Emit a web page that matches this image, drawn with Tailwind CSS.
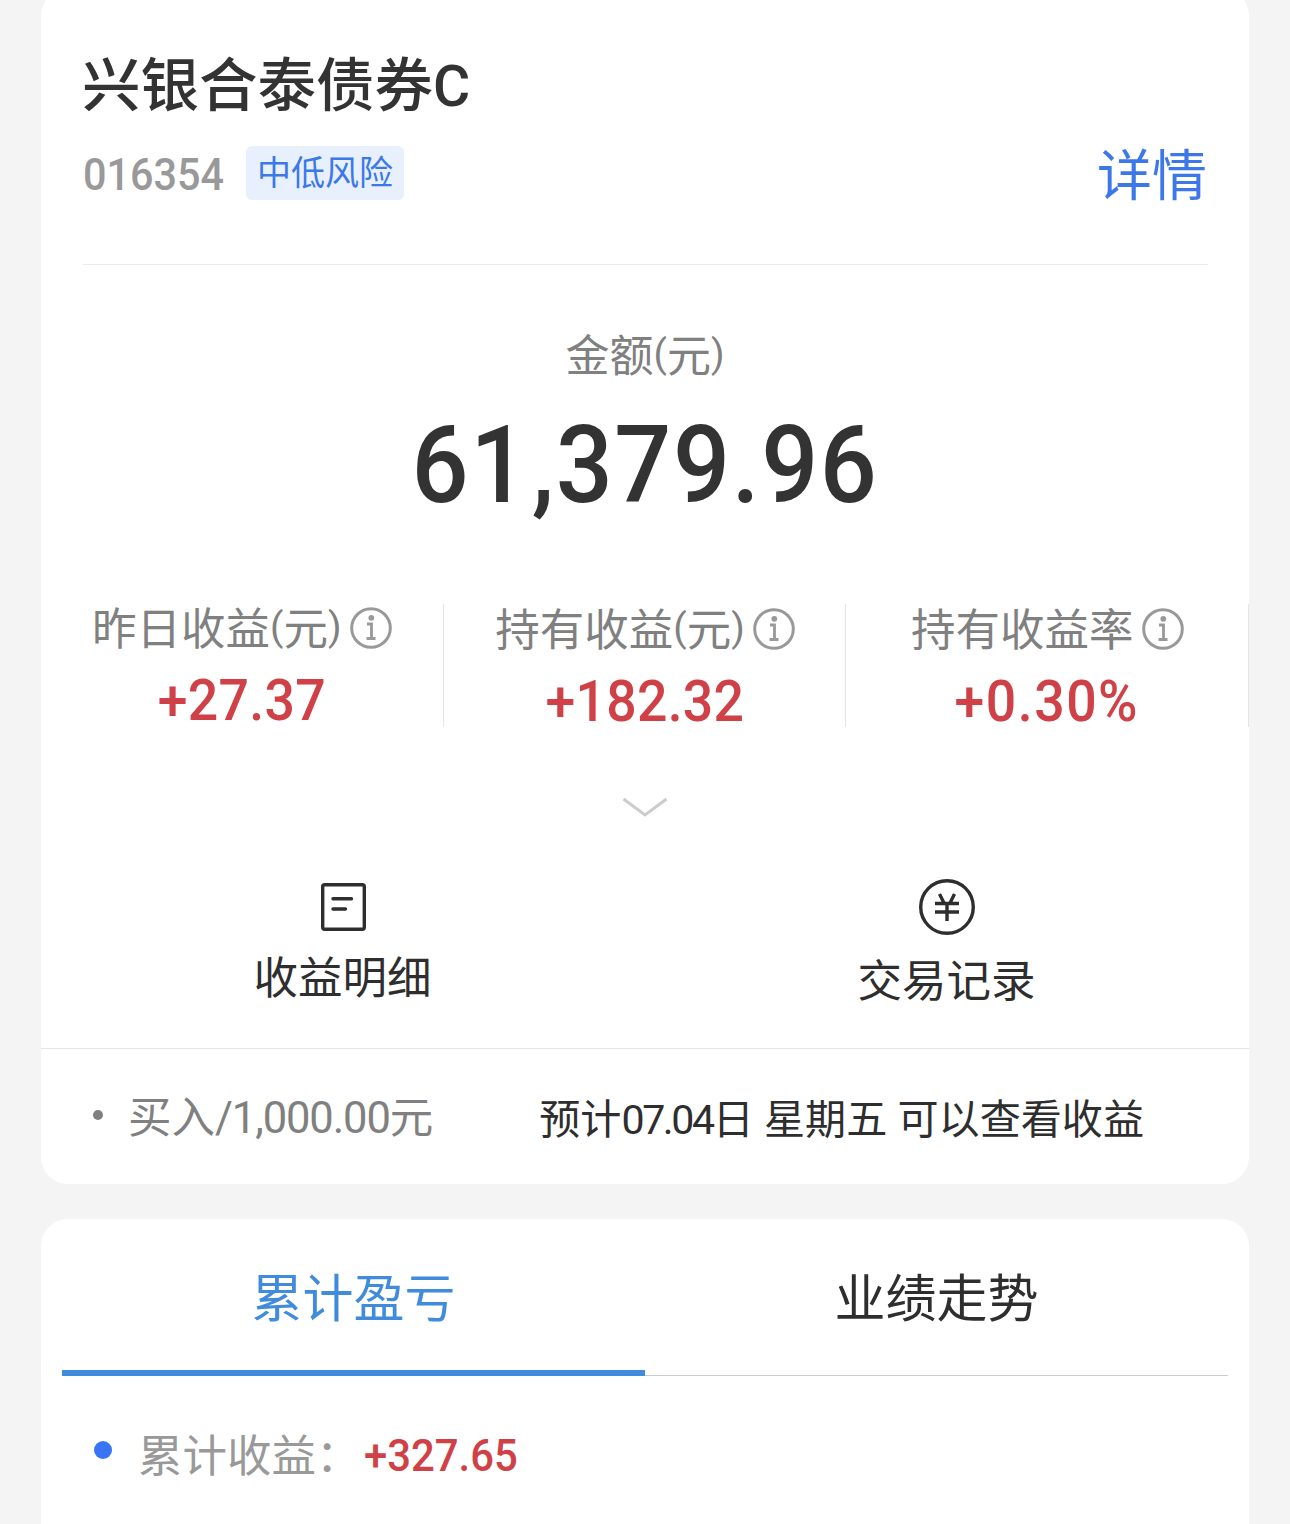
<!DOCTYPE html>
<html lang="zh-CN">
<head>
  <meta charset="UTF-8">
  <meta name="viewport" content="width=device-width, initial-scale=1.0">
  <title>兴银合泰债券C</title>
  <script src="https://cdn.jsdelivr.net/npm/@tailwindcss/browser@4"></script>
</head>
<body class="h-[1524px] overflow-hidden bg-[#f4f4f4] px-[41px] font-[Roboto,'Noto_Sans_CJK_SC',sans-serif] text-[#333]">

  <!-- Fund card -->
  <section class="-mt-[11px] h-[1195px] rounded-[27px] bg-white pt-[67px]">
    <div class="mr-[41px] ml-[42px] h-[209px] border-b border-[#ebebeb]">
      <h1 class="-ml-px h-[60px] text-[58.5px] leading-[61px] font-medium whitespace-nowrap">兴银合泰债券<span class="text-[57px] leading-none">C</span></h1>
      <div class="mt-[30px] flex h-[54px] items-center">
        <span class="w-[141px] origin-left scale-x-[0.93] pt-[3px] text-[44.5px] leading-[54px] font-medium text-[#999]">016354</span>
        <span class="ml-[22px] h-[54px] w-[158px] rounded-md bg-[#e8f0fd] text-center text-[34px] leading-[55px] text-[#3c78e8]">中低风险</span>
        <a href="#" class="mr-px ml-auto pt-[6px] text-[55px] leading-[56px] text-[#3c78e8]">详情</a>
      </div>
    </div>

    <!-- Amount -->
    <div class="mt-[62px] text-center">
      <p class="h-[60px] text-[44px] leading-[60px] text-[#808080]">金额<span class="align-[5px] text-[39px] leading-none">(</span>元<span class="align-[5px] text-[39px] leading-none">)</span></p>
      <p class="mt-6 scale-x-[0.93] text-[108px] leading-[108px] font-medium tracking-[1.7px]">61<span class="ml-[3px]">,</span>379.96</p>
    </div>

    <!-- Earnings -->
    <div class="mt-[85px] grid h-[123px] grid-cols-3 text-center">
      <div class="border-r border-[#e5e5e5]">
        <div class="flex h-[52px] items-center justify-center text-[44.5px] leading-[52px] text-[#808080]">
          <span>昨日收益<span class="align-[5px] text-[39px] leading-none">(</span>元<span class="align-[5px] text-[39px] leading-none">)</span></span>
          <svg class="mt-[-5px] ml-2 size-[42px]" viewBox="0 0 42 42" fill="none" stroke="#999" stroke-width="3"><circle cx="21" cy="21" r="19.3"/><path d="M17 17h4.5v14.5M16.5 31.5h9" stroke-width="2.8"/><circle cx="21.3" cy="10.8" r="2.9" fill="#999" stroke="none"/></svg>
        </div>
        <p class="mt-5 scale-x-[0.94] text-[57px] leading-[50px] font-medium tracking-[0.3px] text-[#cf4146]">+27.37</p>
      </div>
      <div class="border-r border-[#e5e5e5]">
        <div class="flex h-[52px] items-center justify-center pt-px pl-px text-[44.5px] leading-[52px] text-[#808080]">
          <span>持有收益<span class="align-[5px] text-[39px] leading-none">(</span>元<span class="align-[5px] text-[39px] leading-none">)</span></span>
          <svg class="mt-[-4px] ml-2 size-[42px]" viewBox="0 0 42 42" fill="none" stroke="#999" stroke-width="3"><circle cx="21" cy="21" r="19.3"/><path d="M17 17h4.5v14.5M16.5 31.5h9" stroke-width="2.8"/><circle cx="21.3" cy="10.8" r="2.9" fill="#999" stroke="none"/></svg>
        </div>
        <p class="mt-[21px] scale-x-[0.94] text-[57px] leading-[50px] font-medium tracking-[0.3px] text-[#cf4146]">+182.32</p>
      </div>
      <div class="border-r border-[#e5e5e5]">
        <div class="flex h-[52px] items-center justify-center pt-px pl-px text-[44.5px] leading-[52px] text-[#808080]">
          <span>持有收益率</span>
          <svg class="mt-[-4px] ml-[9px] size-[42px]" viewBox="0 0 42 42" fill="none" stroke="#999" stroke-width="3"><circle cx="21" cy="21" r="19.3"/><path d="M17 17h4.5v14.5M16.5 31.5h9" stroke-width="2.8"/><circle cx="21.3" cy="10.8" r="2.9" fill="#999" stroke="none"/></svg>
        </div>
        <p class="mt-[21px] scale-x-[0.94] text-[57px] leading-[50px] font-medium tracking-[1.6px] text-[#cf4146]">+0.30%</p>
      </div>
    </div>

    <svg class="mx-auto mt-[69px] h-[22px] w-[46px]" viewBox="0 0 46 22" fill="none" stroke="#ccc" stroke-width="3"><path d="M1.5 3 23 19 44.5 3"/></svg>

    <!-- Shortcuts -->
    <div class="mt-[61px] grid h-[170px] grid-cols-2 border-b border-[#e5e5e5] text-[44.5px] leading-[52px] text-[#2e2e2e]">
      <a href="#" class="flex flex-col items-center pt-1">
        <svg class="ml-px h-12 w-[46px]" viewBox="0 0 46 48" fill="none" stroke="#2e2e2e" stroke-width="3.4"><rect x="1.7" y="1.7" width="41.6" height="44.6" rx="2"/><path d="M12 15.7h18.5M12 26h12.5" stroke-linecap="round"/></svg>
        <span class="mt-[22px] -ml-px">收益明细</span>
      </a>
      <a href="#" class="flex flex-col items-center">
        <svg class="size-14" viewBox="0 0 56 56" fill="none" stroke="#2e2e2e" stroke-width="3.4"><circle cx="28" cy="28" r="26.3"/><path d="M20.5 15 25 24M35.5 15 31 24M16 24.5H40M16 33H40M28 24.5V42"/></svg>
        <span class="mt-[21px] -ml-px">交易记录</span>
      </a>
    </div>

    <!-- Pending order -->
    <div class="flex h-[135px] items-center">
      <span class="mt-[-4px] ml-[52px] size-[10px] rounded-full bg-[#808080]"></span>
      <span class="mt-1 ml-[25px] text-[43.5px] leading-[60px] whitespace-nowrap text-[#808080]">买入<span class="tracking-[-1.1px]">/1,000.00</span>元</span>
      <span class="mt-[7px] ml-[106px] text-[41.1px] leading-[60px] whitespace-nowrap text-[#2e2e2e]">预计<span class="tracking-[-2.4px]">07.04</span>日 星期五 可以查看收益</span>
    </div>
  </section>

  <!-- Chart card -->
  <section class="mt-[35px] h-[340px] rounded-t-[27px] bg-white px-[21px]">
    <div class="grid h-[157px] grid-cols-2 grid-rows-[157px] text-center text-[51px] leading-[162px]">
      <a href="#" class="border-b-[6px] border-[#418bdd] text-[#418bdd]">累计盈亏</a>
      <a href="#" class="border-b border-[#ccc] text-[#2e2e2e]">业绩走势</a>
    </div>
    <div class="flex h-[160px] items-center">
      <span class="mt-[-12px] ml-8 size-[18px] rounded-full bg-[#3875f6]"></span>
      <span class="mt-[2px] ml-[26px] text-[44.5px] leading-[60px] text-[#999]">累计收益：</span>
      <span class="ml-[3px] origin-left scale-x-[0.94] text-[44.5px] leading-[60px] font-medium text-[#cf4146]">+327.65</span>
    </div>
  </section>

</body>
</html>
